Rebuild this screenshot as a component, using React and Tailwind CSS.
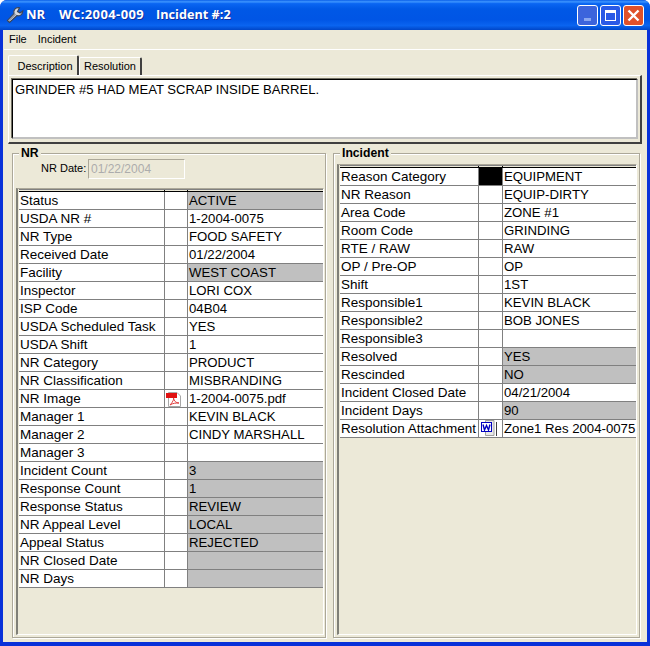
import React from 'react'

const nrRows = [
    ['Status', 'ACTIVE', true],
    ['USDA NR #', '1-2004-0075'],
    ['NR Type', 'FOOD SAFETY'],
    ['Received Date', '01/22/2004'],
    ['Facility', 'WEST COAST', true],
    ['Inspector', 'LORI COX'],
    ['ISP Code', '04B04'],
    ['USDA Scheduled Task', 'YES'],
    ['USDA Shift', '1'],
    ['NR Category', 'PRODUCT'],
    ['NR Classification', 'MISBRANDING'],
    ['NR Image', '1-2004-0075.pdf', false, 'pdf'],
    ['Manager 1', 'KEVIN BLACK'],
    ['Manager 2', 'CINDY MARSHALL'],
    ['Manager 3', ''],
    ['Incident Count', '3', true],
    ['Response Count', '1', true],
    ['Response Status', 'REVIEW', true],
    ['NR Appeal Level', 'LOCAL', true],
    ['Appeal Status', 'REJECTED', true],
    ['NR Closed Date', '', true],
    ['NR Days', '', true],
]

const incidentRows = [
    ['Reason Category', 'EQUIPMENT', false, 'black'],
    ['NR Reason', 'EQUIP-DIRTY'],
    ['Area Code', 'ZONE #1'],
    ['Room Code', 'GRINDING'],
    ['RTE / RAW', 'RAW'],
    ['OP / Pre-OP', 'OP'],
    ['Shift', '1ST'],
    ['Responsible1', 'KEVIN BLACK'],
    ['Responsible2', 'BOB JONES'],
    ['Responsible3', ''],
    ['Resolved', 'YES', true],
    ['Rescinded', 'NO', true],
    ['Incident Closed Date', '04/21/2004'],
    ['Incident Days', '90', true],
    ['Resolution Attachment', 'Zone1 Res 2004-0075', false, 'word'],
]

function WrenchIcon() {
    return (
        <svg width="18" height="18" viewBox="0 0 18 18" className="shrink-0">
            <path d="M1.5 14.5 L3.5 16.5 L11 9.5 C13.5 10.5 16.5 9 16.8 5 L14 7 L11.5 5.5 L13.5 1.8 C9.5 1 7 4 8 7.5 Z" fill="#d4d8e0" stroke="#3c4454" strokeWidth="1.1" />
            <path d="M3 14.5 L9.5 8" stroke="#8a92a4" strokeWidth="1.4" />
        </svg>
    )
}

function PdfIcon() {
    return (
        <svg width="16" height="16" viewBox="0 0 16 16">
            <path d="M2.5 1.5 H11 L14.5 5 V15.5 H2.5 Z" fill="#fff" stroke="#a8a8a8" />
            <rect x="0" y="2" width="11" height="5" fill="#e01010" />
            <path d="M4 14 C7 11 8 8 7.5 7 C8 10 10 12 13 12 C10 12 7 12 4 14 Z" fill="none" stroke="#e04040" />
        </svg>
    )
}

function WordIcon() {
    return (
        <svg width="17" height="17" viewBox="0 0 17 17">
            <path d="M4.5 0.5 H13 V15.5 H4.5 Z" fill="#e8e8e8" stroke="#a0a0a0" />
            <path d="M15.5 2 V16" stroke="#404040" />
            <rect x="0.5" y="2.5" width="10" height="9" fill="#fff" stroke="#0000c0" />
            <path d="M2 4.5 L3.5 10 L5.5 5.5 L7.5 10 L9 4.5" fill="none" stroke="#0000c0" strokeWidth="1.4" />
        </svg>
    )
}

function MiddleCell({ kind }) {
    if (kind === 'black') return <div className="h-full bg-black" />
    if (kind === 'pdf') return <div className="flex h-full items-center pl-[1px]"><PdfIcon /></div>
    if (kind === 'word') return <div className="flex h-full items-center pl-[2px]"><WordIcon /></div>
    return null
}

function Grid({ rows, labelWidth, middleWidth }) {
    return (
        <div className="h-full border-l-2 border-l-[#808078] border-t border-t-[#aca899] border-b border-b-white border-r border-r-white">
            <div className="ml-[1px] flex h-[3px] border-t border-b border-t-[#808080] border-b-black">
                <div className={`${labelWidth} shrink-0 border-r border-black`} />
                <div className={`${middleWidth} shrink-0 border-r border-black`} />
            </div>
            {rows.map(([label, value, gray, kind]) => (
                <div key={label} className="ml-[1px] flex h-[18px] border-b border-[#808080] text-[13.5px] leading-[17px] text-black">
                    <div className={`${labelWidth} shrink-0 border-r border-[#808080] bg-white pl-[1px] whitespace-nowrap overflow-hidden`}>{label}</div>
                    <div className={`${middleWidth} shrink-0 border-r border-[#808080] bg-white`}><MiddleCell kind={kind} /></div>
                    <div className={`min-w-0 flex-1 pl-[1px] text-[13.2px] whitespace-nowrap overflow-hidden ${gray ? 'bg-[#c0c0c0]' : 'bg-white'}`}>{value}</div>
                </div>
            ))}
        </div>
    )
}

function GroupBox({ title, className, children }) {
    return (
        <div className={`relative border border-[#aca899] shadow-[inset_1px_1px_0_#fff,1px_1px_0_#fff] ${className}`}>
            <div className="absolute left-[6px] top-[-7px] bg-[#ece9d8] px-[2px] text-[12.2px] font-bold leading-[13px] text-black">{title}</div>
            {children}
        </div>
    )
}

function CaptionButton({ className, children }) {
    return (
        <div className={`flex h-[21px] w-[21px] items-center justify-center rounded-[3px] border border-white ${className}`}>
            {children}
        </div>
    )
}

export default function App() {
    return (
        <div className="flex h-[646px] w-[650px] flex-col overflow-hidden rounded-t-[7px] bg-[#0831d9] font-['Liberation_Sans',sans-serif]">
            {/* title bar */}
            <div className="flex h-[30px] shrink-0 items-center bg-[linear-gradient(180deg,#0a5fe8_0%,#3d95ff_6%,#0a66f2_12%,#0058e6_30%,#0055e5_65%,#0a64f0_85%,#0046c8_100%)] pl-[6px] pr-[6px]">
                <WrenchIcon />
                <div className="ml-[2px] flex flex-1 whitespace-nowrap font-['Open_Sans',sans-serif] text-[13px] font-bold text-white [text-shadow:1px_1px_0_#0f2f9f]">
                    <span className="w-[33px]">NR</span>
                    <span className="w-[97px] tracking-[0.4px]">WC:2004-009</span>
                    <span className="text-[12.7px]">Incident #:2</span>
                </div>
                <div className="flex gap-[2px]">
                    <CaptionButton className="border-[#7f9ff0] bg-[#3c64dc]">
                        <div className="mt-[8px] h-[3px] w-[7px] bg-[#8aa6f0]" />
                    </CaptionButton>
                    <CaptionButton className="bg-[#2a5ae6]">
                        <div className="h-[11px] w-[11px] border border-t-[3px] border-white" />
                    </CaptionButton>
                    <CaptionButton className="bg-[#e0512a]">
                        <svg width="13" height="13" viewBox="0 0 13 13">
                            <path d="M1.5 1.5 L11.5 11.5 M11.5 1.5 L1.5 11.5" stroke="#fff" strokeWidth="2.4" />
                        </svg>
                    </CaptionButton>
                </div>
            </div>

            {/* window body */}
            <div className="mx-[3px] mb-[4px] flex min-h-0 flex-1 flex-col border-l border-r border-[#ece9d8] bg-[#ece9d8]">
                <div className="flex h-[20px] shrink-0 items-center gap-[11px] border-b border-white pl-[5px] text-[11px] text-black">
                    <span>File</span>
                    <span>Incident</span>
                </div>

                {/* tabs */}
                <div className="ml-[4px] mr-[4px] mt-[5px] flex h-[20px] shrink-0 items-end text-[11px] text-black">
                    <div className="relative z-10 flex h-[20px] w-[71px] items-center justify-center rounded-t-[2px] border-l border-t border-r-2 border-white border-r-[#404040] bg-[#ece9d8] pl-[4px] pt-[1px]">Description</div>
                    <div className="flex h-[18px] w-[63px] items-center justify-center rounded-t-[2px] border-l border-t border-r-2 border-white border-r-[#404040]">Resolution</div>
                </div>
                <div className="ml-[4px] mr-[4px] h-[69px] shrink-0 border-b-2 border-l border-r-2 border-t border-white border-b-[#404040] border-r-[#404040] pb-[3px] pl-[3px] pr-[2px] pt-[3px]">
                    <div className="h-[60px] border-b-2 border-l border-r-2 border-t border-black border-b-[#c0c0c0] border-r-[#c0c0c0] bg-white pl-[2px] pt-[1px] text-[13.1px] leading-[18px] text-black shadow-[-1px_-1px_0_#716f64]">
                        GRINDER #5 HAD MEAT SCRAP INSIDE BARREL.
                    </div>
                </div>

                {/* group boxes */}
                <div className="mt-[9px] ml-[8px] mr-[6px] flex h-[485px] gap-[7px]">
                    <GroupBox title="NR" className="flex w-[314px] shrink-0 flex-col pl-[3px] pr-[1px] pb-[2px]">
                        <div className="flex h-[34px] shrink-0 items-center pb-[5px] pl-[25px] text-[11px] text-black">
                            <span className="w-[47px] whitespace-nowrap">NR Date:</span>
                            <div className="flex h-[20px] w-[97px] items-center border border-[#aca899] border-b-white border-r-white pl-[2px] text-[12px] text-[#acacac]">01/22/2004</div>
                        </div>
                        <div className="min-h-0 flex-1">
                            <Grid rows={nrRows} labelWidth="w-[146px]" middleWidth="w-[23px]" />
                        </div>
                    </GroupBox>
                    <GroupBox title="Incident" className="flex w-[307px] shrink-0 flex-col pl-[3px] pr-[2px] pb-[2px] pt-[10px]">
                        <div className="min-h-0 flex-1">
                            <Grid rows={incidentRows} labelWidth="w-[139px]" middleWidth="w-[24px]" />
                        </div>
                    </GroupBox>
                </div>
            </div>
        </div>
    )
}
